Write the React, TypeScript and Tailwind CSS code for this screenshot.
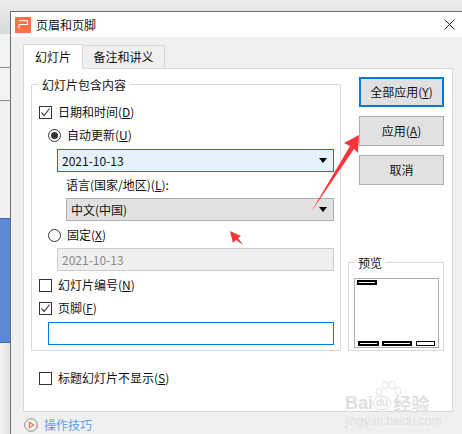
import type { ReactNode } from "react";

const font = "font-['Microsoft_YaHei','Noto_Sans_CJK_SC',sans-serif]";

function Check({ checked, label, className = "" }: { checked?: boolean; label: ReactNode; className?: string }) {
    return (
        <div className={`flex h-5 items-center gap-[6px] ${className}`}>
            <span className="flex h-[13px] w-[13px] items-center justify-center border border-[#333333] bg-white">
                {checked && (
                    <svg width="11" height="11" viewBox="0 0 11 11" fill="none">
                        <path d="M1.5 5.5L4.2 8.5L9.5 1.5" stroke="#444444" strokeWidth="1.2" />
                    </svg>
                )}
            </span>
            <span className="text-[12px] text-[#111111]">{label}</span>
        </div>
    );
}

function Radio({ checked, label, className = "" }: { checked?: boolean; label: ReactNode; className?: string }) {
    return (
        <div className={`flex h-5 items-center gap-[6px] ${className}`}>
            <span className="flex h-[13px] w-[13px] items-center justify-center rounded-full border border-[#333333] bg-white">
                {checked && <span className="h-[7px] w-[7px] rounded-full bg-[#333333]" />}
            </span>
            <span className="text-[12px] text-[#111111]">{label}</span>
        </div>
    );
}

function Select({ value, className }: { value: string; className: string }) {
    return (
        <div className={`flex h-[23px] items-center justify-between border pl-1 pr-[6px] text-[12px] text-[#111111] ${className}`}>
            <span>{value}</span>
            <span className="h-0 w-0 border-x-[4px] border-t-[5px] border-x-transparent border-t-black" />
        </div>
    );
}

function Btn({ children, active }: { children: ReactNode; active?: boolean }) {
    return (
        <button
            className={`h-[30px] w-[85px] bg-[#e1e1e1] text-[12px] text-[#111111] ${active ? "border-2 border-[#0078d7]" : "border border-[#adadad]"}`}
        >
            {children}
        </button>
    );
}

export default function App() {
    return (
        <div className={`relative h-[434px] w-[462px] overflow-hidden bg-[#f0f0f0] ${font}`}>
            {/* window behind the dialog */}
            <div className="h-[34px] bg-gradient-to-b from-[#ececec] to-[#d9d9d9]" />
            <div className="flex w-[10px] flex-col">
                <div className="h-[34px] border-b border-[#8a8a8a] bg-[#f2f2f2]" />
                <div className="h-[33px] border-b border-[#8a8a8a] bg-[#f2f2f2]" />
                <div className="h-[117px] bg-[#f0f0f0]" />
                <div className="h-[125px] border-y border-[#3f66a8] bg-[#5a8ad6]" />
                <div className="h-[91px] bg-gradient-to-r from-[#f2f2f2] to-[#e2e2e2]" />
            </div>

            {/* dialog */}
            <div className="absolute left-[10px] top-[11px] h-[423px] w-[452px] border-l border-t border-[#6e6e6e] bg-[#f0f0f0]">
                <div className="flex h-[25px] items-center bg-white pl-1">
                    <span className="flex h-4 w-4 items-center justify-center bg-[#fb7149]">
                        <svg width="11" height="9" viewBox="0 0 11 9" fill="none">
                            <path d="M1 .8H9.5V4.5H1M1 4.5V8.5" stroke="white" strokeWidth="1.1" />
                        </svg>
                    </span>
                    <span className="ml-[5px] text-[12px] text-[#111111]">页眉和页脚</span>
                    <svg className="ml-auto mr-[7px]" width="11" height="11" viewBox="0 0 11 11" fill="none">
                        <path d="M.5 .5L10.5 10.5M10.5 .5L.5 10.5" stroke="#222222" />
                    </svg>
                </div>

                <div className="ml-3 mt-[7px] flex h-6">
                    <div className="relative z-10 flex h-[25px] w-[60px] items-center justify-center border-x border-t border-[#d9d9d9] bg-white text-[12px] text-[#111111]">
                        幻灯片
                    </div>
                    <div className="mt-[1px] flex w-[82px] items-center justify-center border-r border-t border-[#d9d9d9] text-[12px] text-[#111111]">
                        备注和讲义
                    </div>
                </div>

                {/* tab panel */}
                <div className="ml-3 flex h-[344px] w-[430px] border border-[#d9d9d9] bg-white pl-[7px] pt-[15px]">
                    <div className="w-[310px]">
                        <div className="relative h-[267px] border border-[#d9d9d9] pl-[7px] pr-[6px] pt-[17px]">
                            <span className="absolute -top-[9px] left-[6px] bg-white px-1 text-[12px] leading-[18px] text-[#111111]">
                                幻灯片包含内容
                            </span>
                            <Check checked label={<>日期和时间(<u>D</u>)</>} />
                            <Radio checked className="ml-[9px] mt-[3px]" label={<>自动更新(<u>U</u>)</>} />
                            <Select value="2021-10-13" className="ml-[18px] mt-1 border-[#0078d7] bg-[#e5f1fb]" />
                            <div className="ml-[27px] mt-[3px] flex h-5 items-center text-[12px] text-[#111111]">
                                语言(国家/地区)(<u>L</u>):
                            </div>
                            <Select value="中文(中国)" className="ml-[27px] mt-[3px] border-[#adadad] bg-[#e1e1e1]" />
                            <Radio className="ml-[9px] mt-1" label={<>固定(<u>X</u>)</>} />
                            <div className="ml-[18px] mt-[3px] flex h-[23px] items-center border border-[#cccccc] bg-[#efefef] pl-1 text-[12px] text-[#8a8a8a]">
                                2021-10-13
                            </div>
                            <Check className="mt-1" label={<>幻灯片编号(<u>N</u>)</>} />
                            <Check checked className="mt-[3px]" label={<>页脚(<u>F</u>)</>} />
                            <div className="ml-[9px] mt-1 h-[23px] border border-[#0078d7]" />
                        </div>
                        <Check className="ml-2 mt-[17px]" label={<>标题幻灯片不显示(<u>S</u>)</>} />
                    </div>

                    <div className="ml-[7px] flex h-[267px] w-[96px] flex-col items-end">
                        <div className="-mt-[7px] flex flex-col gap-[9px]">
                            <Btn active>全部应用(<u>Y</u>)</Btn>
                            <Btn>应用(<u>A</u>)</Btn>
                            <Btn>取消</Btn>
                        </div>
                        <div className="relative mt-auto h-[89px] w-[96px] border border-[#d9d9d9] pl-[5px] pt-[15px]">
                            <span className="absolute -top-[9px] left-[5px] bg-white px-1 text-[12px] leading-[18px] text-[#111111]">
                                预览
                            </span>
                            <div className="flex h-[70px] w-[85px] flex-col justify-between border border-[#adadad] px-[1px] pb-[1px] pt-[1px]">
                                <span className="ml-[1px] h-[5px] w-[20px] border-2 border-black bg-white" />
                                <div className="flex items-center pl-[2px]">
                                    <span className="h-[5px] w-[21px] border-2 border-black bg-white" />
                                    <span className="ml-[3px] h-[5px] w-[30px] border-2 border-black bg-white" />
                                    <span className="ml-[4px] h-[5px] w-[19px] border border-black bg-white" />
                                </div>
                            </div>
                        </div>
                    </div>
                </div>

                <div className="ml-[13px] mt-[4px] flex items-center gap-[6px] text-[12px] text-[#5b9bf0]">
                    <svg width="14" height="14" viewBox="0 0 14 14" fill="none">
                        <circle cx="7" cy="7" r="6.3" stroke="#8c8c8c" />
                        <path d="M5.3 4.2L9.6 7L5.3 9.8Z" stroke="#fb7149" strokeWidth="1.1" />
                    </svg>
                    操作技巧
                </div>
            </div>

            {/* annotation arrows */}
            <svg className="pointer-events-none absolute left-0 top-0" width="462" height="434" viewBox="0 0 462 434">
                <path d="M311 212L350 146L344 143L359 135L358 153L354 149Z" fill="#f9343a" />
                <path d="M230 231L241 236L238 238L243 245L236 240L233 243Z" fill="#f9343a" />
            </svg>

            {/* watermark */}
            <div className="pointer-events-none absolute left-[345px] top-[380px] w-[92px] whitespace-nowrap text-[#e0e0e0]">
                <svg className="absolute left-[30px] top-0" width="26" height="22" viewBox="0 0 26 22" fill="none" stroke="#e4e4e4">
                    <ellipse cx="4" cy="12" rx="3" ry="4" />
                    <ellipse cx="10" cy="5" rx="3" ry="4" />
                    <ellipse cx="17" cy="5" rx="3" ry="4" />
                    <ellipse cx="23" cy="11" rx="3" ry="4" />
                </svg>
                <div className="mt-[11px] flex items-center font-['Liberation_Sans',sans-serif] text-[18px] font-bold leading-[24px]">
                    <span>Bai</span>
                    <span className="rounded-full border border-[#e0e0e0] px-[2px] text-[10px] leading-[12px]">du</span>
                    <span className={`ml-[2px] text-[18px] ${font}`}>经验</span>
                </div>
                <div className="font-['Liberation_Sans',sans-serif] text-[12px] leading-[13px]">jingyan.baidu.com</div>
            </div>
        </div>
    );
}
